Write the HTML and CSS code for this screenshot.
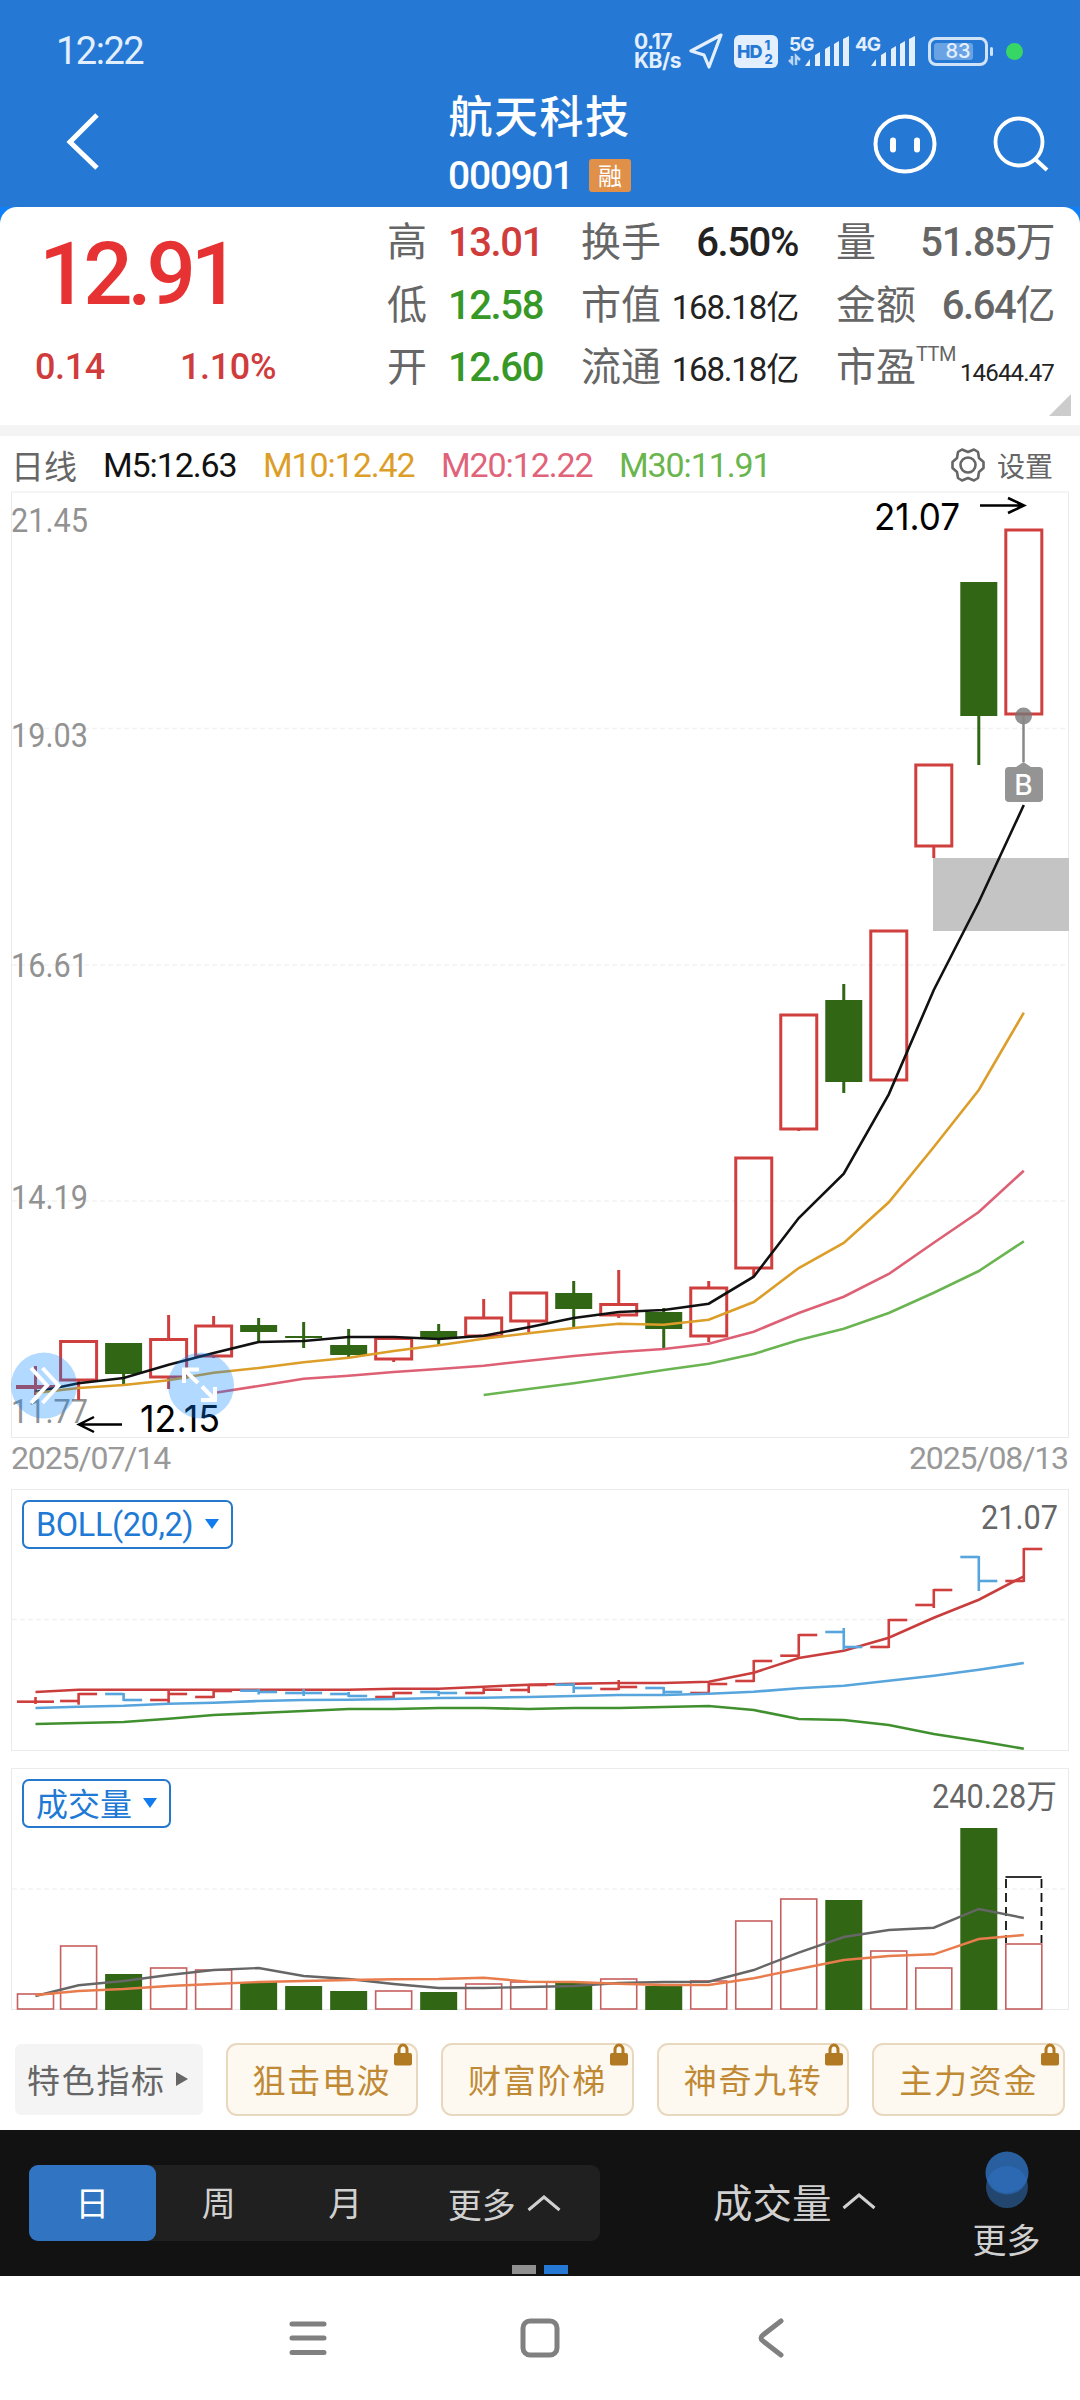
FILE: index.html
```html
<!DOCTYPE html>
<html lang="zh-CN">
<head>
    <meta charset="UTF-8">
    <title>航天科技 000901</title>
    <link rel="stylesheet" href="styles.css">
</head>
<body>
    <header class="header">
        <div class="status">
            <span class="time">12:22</span>
            <div class="status-right">
                <span class="speed">0.17<br>KB/s</span>
                <svg class="plane" width="34" height="36" viewBox="0 0 34 36"><path d="M32 2L2 18l13 4 5 12z" fill="none" stroke="#e3effd" stroke-width="3.2" stroke-linejoin="round"/></svg>
                <span class="hd">HD<i>1<br>2</i></span>
                <svg class="signal" width="62" height="34" viewBox="0 0 62 34">
                    <text x="1" y="17" class="net">5G</text>
                    <path d="M4 22v7l-3-3M8 31v-9l4 4" class="net-arrow"/>
                    <g fill="#e3effd"><path d="M17 32l5-7v7z"/><path d="M27 21l5-3v14h-5zM37 15l5-3v20h-5zM46 10l5-3v25h-5zM55 5l6-3v30h-6z"/></g>
                </svg>
                <svg class="signal" width="62" height="34" viewBox="0 0 62 34">
                    <text x="1" y="17" class="net">4G</text>
                    <g fill="#e3effd"><path d="M17 32l5-7v7z"/><path d="M27 21l5-3v14h-5zM37 15l5-3v20h-5zM46 10l5-3v25h-5zM55 5l6-3v30h-6z"/></g>
                </svg>
                <span class="battery"><b></b><em>83</em></span>
                <span class="dot"></span>
            </div>
        </div>
        <div class="titlebar">
            <svg class="back" width="34" height="60" viewBox="0 0 34 60"><path d="M31 3L4 30l27 26" fill="none" stroke="#fff" stroke-width="5"/></svg>
            <div class="stock">
                <h1>航天科技</h1>
                <p><span class="num">000901</span><span class="tag">融</span></p>
            </div>
            <div class="actions">
                <svg width="66" height="62" viewBox="0 0 66 62"><ellipse cx="33" cy="31" rx="29.5" ry="27.5" fill="none" stroke="#fff" stroke-width="4"/><path d="M21 27.500v9M45 27.500v9" stroke="#fff" stroke-width="6" stroke-linecap="round"/></svg>
                <svg width="60" height="62" viewBox="0 0 60 62"><circle cx="28" cy="29" r="23.500" fill="none" stroke="#fff" stroke-width="3.800"/><path d="M44 46l12 11" stroke="#fff" stroke-width="4"/></svg>
            </div>
        </div>
    </header>
    <section class="quote-wrap">
        <div class="quote">
            <div class="price">
                <div class="now num">12.91</div>
                <div class="change num"><span>0.14</span><span>1.10%</span></div>
            </div>
            <ul class="stats">
                <li><span>高</span><b class="num up">13.01</b></li>
                <li><span>换手</span><b class="num dark">6.50%</b></li>
                <li><span>量</span><b class="num">51.85<i>万</i></b></li>
                <li><span>低</span><b class="num down">12.58</b></li>
                <li><span>市值</span><b class="num dark mid">168.18<i>亿</i></b></li>
                <li><span>金额</span><b class="num">6.64<i>亿</i></b></li>
                <li><span>开</span><b class="num down">12.60</b></li>
                <li><span>流通</span><b class="num dark mid">168.18<i>亿</i></b></li>
                <li><span>市盈<sup>TTM</sup></span><b class="num dark small">14644.47</b></li>
            </ul>
            <span class="corner"></span>
        </div>
    </section>
    <div class="legend">
        <span class="period">日线</span>
        <span class="num m5">M5:12.63</span>
        <span class="num m10">M10:12.42</span>
        <span class="num m20">M20:12.22</span>
        <span class="num m30">M30:11.91</span>
        <span class="setting">
            <svg width="36" height="36" viewBox="0 0 36 36" fill="none" stroke="#666" stroke-width="2.600" stroke-linejoin="round"><path d="M12 2.500l6 2.500 6-2.500 4 2.500 1 6 4.500 4v6L29 25l-1 6-4 2.500-6-2.500-6 2.500L8 31l-1-6-4.500-4v-6L7 11l1-6z"/><circle cx="18" cy="18" r="7.500"/></svg>设置
        </span>
    </div>
    <section class="panel">
        <svg id="kline" width="1080" height="954" viewBox="0 486 1080 954"></svg>
    </section>
    <div class="dates num"><span>2025/07/14</span><span>2025/08/13</span></div>
    <section class="panel">
        <svg id="boll" width="1080" height="272" viewBox="0 1484 1080 272"></svg>
        <a href="###" class="pick"><span class="num">BOLL(20,2)</span><i></i></a>
    </section>
    <section class="panel">
        <svg id="volume" width="1080" height="264" viewBox="0 1756 1080 264"></svg>
        <a href="###" class="pick pick-vol"><span>成交量</span><i></i></a>
    </section>
    <div class="features">
        <a href="###" class="feature-title">特色指标<i></i></a>
        <a href="###" class="feature">狙击电波<svg class="lock" width="18" height="23" viewBox="0 0 18 23"><path d="M5 11V7a4 5 0 0 1 8 0v4" fill="none" stroke="#b17a22" stroke-width="3"/><rect y="10" width="18" height="12.500" rx="2" fill="#b17a22"/></svg></a>
        <a href="###" class="feature">财富阶梯<svg class="lock" width="18" height="23" viewBox="0 0 18 23"><path d="M5 11V7a4 5 0 0 1 8 0v4" fill="none" stroke="#b17a22" stroke-width="3"/><rect y="10" width="18" height="12.500" rx="2" fill="#b17a22"/></svg></a>
        <a href="###" class="feature">神奇九转<svg class="lock" width="18" height="23" viewBox="0 0 18 23"><path d="M5 11V7a4 5 0 0 1 8 0v4" fill="none" stroke="#b17a22" stroke-width="3"/><rect y="10" width="18" height="12.500" rx="2" fill="#b17a22"/></svg></a>
        <a href="###" class="feature">主力资金<svg class="lock" width="18" height="23" viewBox="0 0 18 23"><path d="M5 11V7a4 5 0 0 1 8 0v4" fill="none" stroke="#b17a22" stroke-width="3"/><rect y="10" width="18" height="12.500" rx="2" fill="#b17a22"/></svg></a>
    </div>
    <div class="toolbar">
        <div class="tabs">
            <a href="###" class="active">日</a>
            <a href="###">周</a>
            <a href="###">月</a>
            <a href="###" class="wide">更多<svg width="34" height="18" viewBox="0 0 34 18"><path d="M1.500 16L17 3l15.500 13" fill="none" stroke="#d0d0d0" stroke-width="3"/></svg></a>
        </div>
        <a href="###" class="indicator">成交量<svg width="34" height="18" viewBox="0 0 34 18"><path d="M1.500 16L17 3l15.500 13" fill="none" stroke="#d0d0d0" stroke-width="3"/></svg></a>
        <a href="###" class="more"><svg width="44" height="58" viewBox="0 0 44 58"><circle cx="22" cy="36" r="21" fill="#23466f"/><circle cx="22" cy="22" r="21.500" fill="#2a5f9f"/><path d="M2.200 29a21 21 0 0 1 39.600 0a21.500 21.500 0 0 1-39.600 0z" fill="#2c69b2"/></svg>更多</a>
        <div class="pager"><i></i><i class="on"></i></div>
    </div>
    <nav class="nav">
        <svg width="44" height="44" viewBox="0 0 44 44"><path d="M6 8h32M6 22h32M6 36.500h32"/></svg>
        <svg width="44" height="44" viewBox="0 0 44 44"><rect x="5" y="5" width="34" height="34" rx="7"/></svg>
        <svg width="44" height="44" viewBox="0 0 44 44"><path d="M31 5L13 19q-4 3 0 6l18 14"/></svg>
    </nav>
    <script type="text/javascript">
    var xs = [35.5];
    for (var i = 0; i < 22; i++) {
        xs.push(78.6 + i * 45.01);
    }
    var RED = '#cf3f3d', GREEN = '#306614', BLUE = '#57a5dc';

    function line(x1, y1, x2, y2, color, w, extra) {
        return '<line x1="' + x1 + '" y1="' + y1 + '" x2="' + x2 + '" y2="' + y2 + '" stroke="' + color + '" stroke-width="' + w + '" ' + (extra || '') + '/>';
    }
    function rect(x, y, w, h, fill, stroke, sw, extra) {
        return '<rect x="' + x + '" y="' + y + '" width="' + w + '" height="' + h + '" fill="' + fill + '" stroke="' + (stroke || 'none') + '" stroke-width="' + (sw || 0) + '" ' + (extra || '') + '/>';
    }
    // ys从第start根K线开始
    function curve(start, ys, color, w) {
        var pts = ys.map(function (y, n) {
            return xs[n + start] + ',' + y;
        });
        return '<polyline points="' + pts.join(' ') + '" fill="none" stroke="' + color + '" stroke-width="' + w + '"/>';
    }
    function label(x, y, text, w, cls) {
        return '<text x="' + x + '" y="' + y + '" class="' + cls + '" textLength="' + w + '" lengthAdjust="spacingAndGlyphs">' + text + '</text>';
    }
    function frame(top, bottom, grid) {
        var s = rect(11.5, top, 1057, bottom - top, 'none', '#ebebeb', 1);
        grid.forEach(function (y) {
            s += line(12, y, 1068, y, '#f2f2f2', 1.5, 'stroke-dasharray="5 3"');
        });
        return s;
    }

    // 涨跌, 实体上, 实体下, 最高, 最低
    var candles = [
        [1, 1386.5, 1387.5, 1366, 1395], [1, 1341.5, 1380, 1341, 1400], [0, 1343, 1374, 1343, 1384],
        [1, 1339.5, 1377, 1315, 1389], [1, 1326, 1356, 1316, 1358], [0, 1325, 1332, 1318, 1342],
        [0, 1336, 1338, 1322, 1348], [0, 1345, 1355, 1329, 1357], [1, 1338.5, 1359, 1338, 1362],
        [0, 1331, 1338, 1324, 1345], [1, 1318, 1336, 1299, 1336], [1, 1293, 1321, 1293, 1332],
        [0, 1293, 1309, 1281, 1327], [1, 1304.5, 1315, 1270, 1318], [0, 1312, 1329, 1308, 1348],
        [1, 1288, 1336, 1281, 1342], [1, 1158, 1268, 1158, 1276], [1, 1015, 1129, 1015, 1131],
        [0, 1000, 1082, 984, 1093], [1, 931, 1080, 931, 1080], [1, 765, 846, 765, 858],
        [0, 582, 716, 582, 765], [1, 530, 714, 530, 714]
    ];
    function drawKline() {
        var s = frame(492, 1437.5, [728.5, 965, 1201]);
        [['21.45', 532], ['19.03', 747], ['16.61', 977], ['14.19', 1208.5], ['11.77', 1423]].forEach(function (t) {
            s += label(11, t[1], t[0], 77, 'axis');
        });
        s += rect(933, 858, 136, 73, '#c4c4c4');
        candles.forEach(function (c, n) {
            var x = xs[n], color = c[0] ? RED : GREEN;
            if (c[0]) {
                s += line(x, c[3], x, c[1], color, 3) + line(x, c[2], x, c[4], color, 3);
                s += rect(x - 18, c[1], 36, c[2] - c[1], 'none', color, 3);
            } else {
                s += line(x, c[3], x, c[4], color, 3) + rect(x - 18.5, c[1], 37, c[2] - c[1], color);
            }
        });
        s += curve(4, [1393, 1386, 1378.7, 1375.7, 1372, 1369, 1365.7, 1360.7, 1356, 1352, 1349, 1343.7, 1331.7, 1313, 1296.7, 1274, 1242.7, 1212, 1170.7], '#dd6074', 2.6);
        s += curve(10, [1395, 1389, 1383.3, 1376.7, 1370, 1363.7, 1354, 1340, 1328.7, 1313, 1292.7, 1271, 1241.3], '#6ab551', 2.6);
        s += curve(0, [1392, 1383.3, 1378, 1364.7, 1353, 1342, 1341, 1337, 1337, 1339, 1335.7, 1327.3, 1318, 1312, 1310, 1303.7, 1276.7, 1218, 1173.7, 1094.3, 990, 902, 805], '#111', 2.6);
        s += curve(0, [1393, 1388, 1385, 1380.3, 1372.7, 1368, 1362.3, 1357.7, 1351, 1345.3, 1338.7, 1333.3, 1328, 1323.7, 1324.7, 1319.7, 1302, 1268, 1243, 1202.3, 1147, 1090, 1012.7], '#dc9e28', 2.6);
        // 最高最低价
        s += label(874, 530, '21.07', 86, 'mark') + '<path d="M980 505.500h43M1008 498l16 7.500-16 7.500" class="arrow"/>';
        s += label(140, 1432, '12.15', 80, 'mark') + '<path d="M122 1424.500h-43M94 1417l-15 7.500 15 7.500" class="arrow"/>';
        // 买点
        s += '<circle cx="1023.500" cy="716" r="8.500" fill="#777" opacity=".8"/>' + line(1023.5, 716, 1023.5, 762, '#888', 2.5);
        s += '<path d="M1008 767h8l7.500-5 7.500 5h8q4 0 4 4v27q0 4-4 4h-30q-4 0-4-4v-27q0-4 4-4z" fill="#949494"/><text x="1023.500" y="795" class="buy">B</text>';
        // 悬浮按钮
        s += '<circle cx="44" cy="1385.500" r="33" class="float"/><path d="M31 1368l16 17.500-16 17.500M42.500 1368l16 17.500-16 17.500" class="float-icon"/>';
        s += '<circle cx="201" cy="1385.500" r="33" class="float"/><path d="M199 1369.500h-15v13.500M184 1369.500l14 13.500M201 1400h14v-13M215 1400l-13-13.500" class="float-icon"/>';
        document.getElementById('kline').innerHTML = s;
    }

    // 涨跌, 开, 收, 最高, 最低
    var bars = [
        [1, 1701.7, 1701.7, 1698, 1703], [1, 1701, 1694, 1694, 1703.7], [0, 1694, 1700, 1694, 1700], [1, 1700, 1694, 1690, 1702],
        [1, 1697, 1691, 1691, 1697], [0, 1690.7, 1692, 1690, 1693.5], [0, 1693, 1693, 1690, 1695], [0, 1694, 1696, 1693, 1696],
        [1, 1697, 1693, 1693, 1697], [0, 1692, 1693, 1692, 1695], [1, 1693, 1689.7, 1687, 1693], [1, 1690, 1685, 1685, 1692],
        [0, 1684.7, 1688, 1684, 1692], [1, 1689, 1687, 1681, 1689], [0, 1688, 1692, 1688, 1694], [1, 1693, 1684, 1684, 1693],
        [1, 1681, 1661, 1661, 1681], [1, 1655.7, 1635, 1635, 1655.7], [0, 1632, 1647, 1629, 1649], [1, 1647, 1620, 1620, 1647],
        [1, 1605, 1590, 1590, 1607], [0, 1557, 1581, 1557, 1590], [1, 1581, 1549, 1549, 1581]
    ];
    function drawBoll() {
        var s = frame(1489.5, 1750.5, [1619.5]);
        s += curve(0, [1692, 1689.7, 1689.7, 1689.7, 1689.7, 1689.7, 1689.7, 1689.7, 1688.7, 1688.7, 1686.7, 1684.7, 1683.7, 1683, 1683, 1681.7, 1672.7, 1658, 1650.7, 1637.7, 1617.7, 1599.7, 1576.3], '#c93d3c', 2.6);
        bars.forEach(function (b, n) {
            var x = xs[n], color = b[0] ? RED : BLUE;
            s += line(x - 18.5, b[1], x, b[1], color, 2.6) + line(x, b[2], x + 18.5, b[2], color, 2.6) + line(x, b[3] - 1, x, b[4] + 1, color, 2.6);
        });
        s += curve(0, [1708, 1706.7, 1705.7, 1703.7, 1702.7, 1701, 1700, 1699.7, 1699, 1698, 1697.7, 1697, 1696, 1695, 1695, 1693.7, 1691.7, 1688.3, 1685.7, 1680.7, 1675.7, 1669.7, 1663], BLUE, 2.6);
        s += curve(0, [1724, 1723, 1722, 1718.7, 1715, 1713, 1711, 1709, 1709, 1708, 1708, 1709, 1708, 1708, 1707, 1706, 1710, 1719, 1720, 1725, 1734, 1741, 1748.7], '#40902f', 2.6);
        s += label(981, 1529, '21.07', 77, 'value');
        document.getElementById('boll').innerHTML = s;
    }

    var volumes = [1994, 1946, 1974, 1968, 1970, 1982, 1986, 1991, 1991, 1992, 1984, 1982, 1982, 1979, 1986, 1981, 1921, 1899, 1900, 1951, 1968, 1828, 1944];
    function drawVolume() {
        var s = frame(1768.5, 2009.5, [1889]);
        volumes.forEach(function (y, n) {
            var x = xs[n];
            if (candles[n][0]) {
                s += rect(x - 18, y, 36, 2009 - y, '#fff', '#c65f5e', 1.6);
            } else {
                s += rect(x - 18.5, y, 37, 2010 - y, GREEN);
            }
        });
        // 预测量
        s += line(1005.5, 1877, 1041.5, 1877, '#333', 2);
        s += line(1006, 1879, 1006, 1943, '#111', 1.8, 'stroke-dasharray="9 5"') + line(1041.5, 1879, 1041.5, 1943, '#111', 1.8, 'stroke-dasharray="9 5"');
        s += curve(0, [1996, 1985.3, 1981, 1975, 1970, 1968, 1976, 1979, 1984, 1988, 1988, 1987, 1986, 1983, 1982, 1981.7, 1970, 1952.7, 1937, 1930, 1927.7, 1909, 1918], '#666', 2.4);
        s += curve(0, [1995, 1991, 1989, 1986, 1984, 1982, 1981, 1980, 1979.3, 1979, 1977.7, 1981.7, 1982, 1983.7, 1985, 1985, 1978.3, 1969, 1960, 1956, 1954.3, 1939, 1935], '#e87c4c', 2.4);
        s += label(932, 1808, '240.28万', 125, 'value');
        document.getElementById('volume').innerHTML = s;
    }
    drawKline();
    drawBoll();
    drawVolume();
    </script>
</body>
</html>
```
FILE: styles.css
```css
*{padding: 0;margin: 0;list-style: none;box-sizing: border-box;}
body{width: 1080px;height: 2400px;background: #fff;font-family: "Noto Sans CJK SC",sans-serif;color: #666;overflow: hidden;}
a{text-decoration: none;color: inherit;}
i,em{font-style: normal;}
svg{display: block;flex: none;}
.num{font-family: Roboto,"Noto Sans CJK SC",sans-serif;font-weight: 500;letter-spacing: -.035em;}

.header{height: 207px;background: #2578d4;color: #fff;}
.status{height: 80px;padding: 22px 57px 0 56px;display: flex;justify-content: space-between;color: #e3effd;}
.time{font: 400 38px/58px Roboto,sans-serif;letter-spacing: -1.500px;}
.status-right{display: flex;align-items: center;height: 58px;}
.speed{width: 55px;font: 700 21px/19px Inter,sans-serif;letter-spacing: -.5px;}
.plane{margin-right: 11px;}
.hd{width: 44px;height: 33px;border-radius: 6px;background: #e3effd;color: #2578d4;font: 800 18px/33px Inter,sans-serif;display: flex;padding-left: 3px;letter-spacing: -1px;}
.hd i{font-size: 13px;line-height: 14px;padding-top: 3px;margin-left: 3px;}
.signal{margin-left: 4px;overflow: visible;}
.hd + .signal{margin-left: 10px;}
.net{font: 700 19px Inter,sans-serif;fill: #e3effd;letter-spacing: -1px;}
.net-arrow{fill: none;stroke: #b9d5f5;stroke-width: 2.5;}
.battery{position: relative;width: 60px;height: 29px;margin: 0 35px 0 12px;border: 3px solid #cfe2f8;border-radius: 8px;text-align: center;font: 500 20px/23px Inter,sans-serif;}
.battery b{position: absolute;left: 3px;top: 3px;width: 39px;height: 17px;border-radius: 3px;background: #6aa3e3;}
.battery em{position: relative;}
.battery:after{content: "";position: absolute;right: -8px;top: 7px;width: 3px;height: 9px;border-radius: 2px;background: #cfe2f8;}
.dot{width: 17px;height: 17px;margin-right: -17px;border-radius: 50%;background: #37d765;transform: translateX(-17px);}
.titlebar{height: 127px;padding: 0 29px 0 66px;display: grid;grid-template-columns: 1fr 200px 1fr;}
.back{margin-top: 32px;}
.stock{margin-left: -29px;width: 220px;text-align: center;white-space: nowrap;}
.stock h1{font-size: 44px;font-weight: 500;line-height: 69px;letter-spacing: 1.5px;}
.stock p{display: flex;justify-content: center;align-items: center;height: 45px;margin-top: 4px;}
.stock .num{font-size: 39px;}
.tag{width: 42px;height: 33px;margin-left: 16px;border-radius: 3px;background: #e09049;font-size: 24px;line-height: 32px;}
.actions{display: flex;justify-content: flex-end;gap: 53px;padding-top: 33px;}

.quote-wrap{background: #0f80f7;}
.quote{position: relative;height: 229px;display: flex;background: #fff;border-radius: 17px 17px 0 0;border-bottom: 11px solid #f4f4f4;}
.price{width: 387px;color: #e63232;}
.now{font-size: 87px;line-height: 100px;padding: 17px 0 0 39px;}
.price .now{letter-spacing: -.06em;}
.change{display: flex;padding: 21px 0 0 35px;font-size: 36px;line-height: 44px;color: #cf3c3b;}
.price .change{letter-spacing: -.01em;}
.change span:first-child{width: 145px;}
.stats{flex: 1;display: grid;grid-template-columns: 156px 217px 218px;column-gap: 38px;grid-auto-rows: 62.500px;}
.stats li{display: flex;justify-content: space-between;align-items: baseline;font-size: 40px;line-height: 65px;white-space: nowrap;}
.stats li>span{letter-spacing: 0;}
.stats b i{font-weight: 400;}
.stats .dark{color: #222;}
.stats .up{color: #cf3c3b;}
.stats .down{color: #379827;}
.stats .mid{font-size: 33px;font-weight: 400;}
.stats .small{font-size: 24px;font-weight: 400;}
.stats sup{font: 400 20px/20px Roboto,sans-serif;letter-spacing: -.5px;vertical-align: 20px;}
.corner{position: absolute;right: 9px;bottom: 9px;border-left: 22px solid transparent;border-bottom: 22px solid #ccc;}

.legend{height: 50px;display: flex;align-items: center;padding: 7px 27px 0 11px;font-size: 33px;white-space: nowrap;}
.legend .num{font-size: 34px;font-weight: 400;letter-spacing: -1.100px;}
.period{width: 92px;}
.m5{width: 160px;color: #111;}
.m10{width: 178px;color: #dc9e28;}
.m20{width: 178px;color: #e0637a;}
.m30{color: #6ab54d;}
.setting{margin-left: auto;display: flex;align-items: center;gap: 11px;font-size: 28px;}

.panel{position: relative;}
.axis,.value{font: 400 32.500px Roboto,"Noto Sans CJK SC",sans-serif;fill: #929292;}
.value{fill: #666;}
.mark{font: 400 37px Inter,sans-serif;fill: #000;}
.arrow{fill: none;stroke: #000;stroke-width: 2.500;}
.buy{font: 500 28px Inter,sans-serif;fill: #fff;text-anchor: middle;}
.float{fill: rgba(0,128,255,.3);}
.float-icon{fill: none;stroke: #fff;stroke-width: 4;}
.dates{height: 44px;display: flex;justify-content: space-between;padding: 0 12px 0 11px;font-size: 32px;font-weight: 400;line-height: 37px;color: #999;}
.pick{position: absolute;left: 22px;top: 16px;width: 211px;height: 49px;padding: 0 12px;display: flex;align-items: center;justify-content: space-between;border: 2px solid #2578cb;border-radius: 7px;color: #2079d5;font-size: 32px;line-height: 42px;background: #fff;}
.pick .num{font-weight: 400;font-size: 32.500px;letter-spacing: -.400px;}
.pick span{padding-bottom: 3px;}
.pick .num{padding-bottom: 0;}
.pick i{border: 7px solid transparent;border-top: 10px solid #127bee;border-bottom: 0;margin-top: -2px;}
.pick-vol{top: 23px;width: 149px;}

.features{height: 110px;display: flex;align-items: center;gap: 23px;padding: 8px 15px 0;font-size: 33px;letter-spacing: 1.700px;white-space: nowrap;}
.feature-title{width: 188px;height: 71px;padding-left: 12px;line-height: 70px;display: flex;align-items: center;gap: 10px;background: #f4f4f4;border-radius: 6px;}
.feature-title i{border: 7.500px solid transparent;border-left: 12px solid #666;border-right: 0;}
.feature{position: relative;width: 193px;height: 73px;line-height: 69px;text-align: center;color: #c08a35;background: #fdf9f1;border: 2px solid #e8d8bf;border-radius: 11px;}
.lock{position: absolute;right: 4px;top: -2px;}

.toolbar{position: relative;height: 146px;background: #121212;color: #d0d0d0;}
.toolbar{display: flex;align-items: flex-start;padding-left: 29px;font-size: 34px;}
.tabs{width: 571px;height: 76px;margin-top: 35px;display: flex;background: #202020;border-radius: 9px;line-height: 73px;text-align: center;}
.tabs a{width: 126.500px;}
.tabs .active{background: #3074c2;color: #fff;border-radius: 9px;}
.tabs .wide{flex: 1;display: flex;align-items: center;justify-content: center;gap: 11px;}
.indicator{margin: 35px 0 0 113px;display: flex;align-items: center;gap: 10px;font-size: 39.500px;line-height: 72px;}
.more{margin: 21px 0 0 97px;display: flex;flex-direction: column;align-items: center;line-height: 60px;}
.pager{position: absolute;left: 512px;bottom: 2px;display: flex;gap: 8px;}
.pager i{width: 24px;height: 9px;background: #909090;}
.pager .on{background: #2578d4;}

.nav{height: 124px;display: flex;justify-content: center;align-items: center;gap: 188px;fill: none;stroke: #808080;stroke-width: 5;stroke-linecap: round;}
```
